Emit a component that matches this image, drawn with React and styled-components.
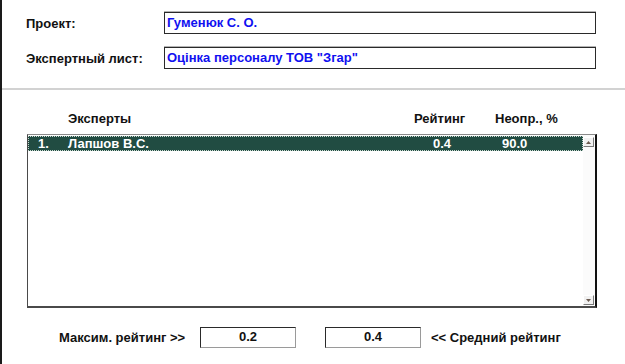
import React from 'react';
import styled, { createGlobalStyle } from 'styled-components';

const GlobalStyle = createGlobalStyle`
  html, body {
    margin: 0;
    padding: 0;
    background: #ffffff;
  }
  body {
    font-family: 'Liberation Sans', Arial, sans-serif;
    font-size: 13px;
    font-weight: bold;
    color: #111;
  }
`;

const Window = styled.div`
  width: 625px;
  height: 364px;
  box-sizing: border-box;
  border-left: 2px solid #1a1a1a;
  display: flex;
  flex-direction: column;
  overflow: hidden;
`;

const Form = styled.div`
  display: flex;
  flex-direction: column;
  gap: 13px;
  padding: 12px 0 0 24px;
`;

const FieldRow = styled.div`
  display: grid;
  grid-template-columns: 138px 432px;
  align-items: center;
`;

const Label = styled.span`
  white-space: nowrap;
  width: ${({ width }) => width || 'auto'};
  flex: none;
`;

const FieldBox = styled.div`
  height: 22px;
  box-sizing: border-box;
  border: 1px solid #2a2a2a;
  box-shadow: 0 -1px 0 #b4b4b4;
  color: #1010f0;
  padding: 0 0 0 2px;
  line-height: 19px;
  white-space: nowrap;
`;

const Separator = styled.div`
  margin-top: 19px;
  height: 2px;
  background: #d2d2d2;
`;

const ListSection = styled.div`
  padding: 21px 0 0 25px;
  display: flex;
  flex-direction: column;
`;

const HeaderRow = styled.div`
  display: grid;
  grid-template-columns: 41px 346px 81px auto;
  height: 16px;
  line-height: 16px;
  margin-bottom: 7px;
`;

const ListBox = styled.div`
  width: 570px;
  height: 174px;
  box-sizing: border-box;
  border-top: 1px solid #8a8a8a;
  border-left: 1px solid #4a4a4a;
  border-bottom: 2px solid #4a4a4a;
  border-right: 2px solid #111;
  display: flex;
  background: #fff;
`;

const Rows = styled.div`
  flex: 1;
  padding-top: 1px;
`;

const Row = styled.div`
  display: grid;
  grid-template-columns: 30px 365px 69px auto;
  height: 15px;
  line-height: 13px;
  box-sizing: border-box;
  padding-left: 9px;
  color: ${({ selected }) => (selected ? '#ffffff' : '#111')};
  background: ${({ selected }) => (selected ? '#214c42' : 'transparent')};
  border: 1px dotted ${({ selected }) => (selected ? '#c8d8d0' : 'transparent')};
`;

const ScrollBar = styled.div`
  width: 12px;
  display: flex;
  flex-direction: column;
  justify-content: space-between;
  background: #fbfbfb;
  padding: 2px 0 1px;
`;

const ScrollButton = styled.div`
  width: 11px;
  height: 10px;
  box-sizing: border-box;
  background: #f1f1f1;
  border-top: 1px solid #fff;
  border-left: 1px solid #fff;
  border-right: 1px solid #7a7a7a;
  border-bottom: 1px solid #7a7a7a;
  display: flex;
  align-items: center;
  justify-content: center;
`;

const Footer = styled.div`
  display: flex;
  align-items: center;
  padding: 19px 0 0 57px;
`;

const ValueBox = styled.div`
  width: 96px;
  height: 21px;
  box-sizing: border-box;
  border: 1px solid #2a2a2a;
  border-right-color: #9a9a9a;
  border-bottom-color: #9a9a9a;
  text-align: center;
  line-height: 17px;
  margin: ${({ margin }) => margin};
`;

function Arrow({ down }) {
  return (
    <svg width="5" height="3" viewBox="0 0 5 3">
      <polygon points={down ? '0,0 5,0 2.5,3' : '0,3 5,3 2.5,0'} fill="#6a5a50" />
    </svg>
  );
}

const experts = [{ n: '1.', name: 'Лапшов В.С.', rating: '0.4', pct: '90.0' }];

export default function App() {
  return (
    <>
      <GlobalStyle />
      <Window>
        <Form>
          <FieldRow>
            <Label>Проект:</Label>
            <FieldBox>Гуменюк С. О.</FieldBox>
          </FieldRow>
          <FieldRow>
            <Label>Экспертный лист:</Label>
            <FieldBox>Оцінка персоналу ТОВ "Згар"</FieldBox>
          </FieldRow>
        </Form>
        <Separator />
        <ListSection>
          <HeaderRow>
            <span />
            <span>Эксперты</span>
            <span>Рейтинг</span>
            <span>Неопр., %</span>
          </HeaderRow>
          <ListBox>
            <Rows>
              {experts.map((e) => (
                <Row key={e.n} selected>
                  <span>{e.n}</span>
                  <span>{e.name}</span>
                  <span>{e.rating}</span>
                  <span>{e.pct}</span>
                </Row>
              ))}
            </Rows>
            <ScrollBar>
              <ScrollButton><Arrow /></ScrollButton>
              <ScrollButton><Arrow down /></ScrollButton>
            </ScrollBar>
          </ListBox>
        </ListSection>
        <Footer>
          <Label width="141px">Максим. рейтинг &gt;&gt;</Label>
          <ValueBox margin="0">0.2</ValueBox>
          <ValueBox margin="0 10px 0 29px">0.4</ValueBox>
          <Label>&lt;&lt; Средний рейтинг</Label>
        </Footer>
      </Window>
    </>
  );
}
